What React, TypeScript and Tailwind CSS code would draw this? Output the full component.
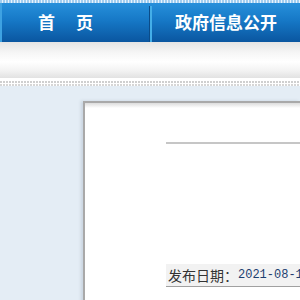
import React from 'react';

const App: React.FC = () => {
  return (
    <div className="w-[300px] h-[300px] overflow-hidden bg-[#e4edf5] font-['Noto_Sans_CJK_SC',sans-serif]">
      {/* dotted strip on top */}
      <div className="h-[3px] bg-[repeating-linear-gradient(90deg,#9fcdf0_0_2px,#e6f3fc_2px_3px)]" />

      {/* Nav bar */}
      <nav className="h-[39px] flex bg-[linear-gradient(180deg,#2690db_0%,#1678c6_45%,#0a56a0_100%)]">
        <div className="w-[2px] bg-[#3ea2e2]" />
        <div className="w-[147px] flex items-center justify-center gap-[21px] text-white font-bold text-[17px] leading-none pb-[3px] pr-[20px]">
          <span>首</span>
          <span>页</span>
        </div>
        <div className="flex flex-col pt-[3px]">
          <div className="flex flex-1">
            <div className="w-[1px] bg-[#0b4c88]" />
            <div className="w-[2px] bg-[#44aee8]" />
          </div>
        </div>
        <div className="flex-1 flex items-center justify-center text-white font-bold text-[17px] leading-none pb-[3px]">
          政府信息公开
        </div>
      </nav>

      {/* Gray band */}
      <div className="h-[36px] bg-[linear-gradient(180deg,#e4e4e4_0%,#f6f6f6_30%,#ffffff_55%,#f2f2f2_80%,#e2e2e2_100%)]" />
      <div className="h-[3px] bg-white" />
      <div className="h-[2px] bg-[repeating-linear-gradient(90deg,#cfcfcf_0_2px,#ffffff_2px_3px)]" />
      <div className="h-[1px] bg-white" />
      <div className="h-[2px] bg-[repeating-linear-gradient(90deg,#d6d6d6_0_2px,#ffffff_2px_3px)]" />

      {/* Main area */}
      <div className="pl-[83px] pt-[15px]">
        <div className="h-[260px] bg-white border-l-2 border-t-2 border-[#a9a9a9] shadow-[-2px_0_3px_rgba(120,140,160,0.25)]">
          <div className="h-[5px] bg-[linear-gradient(180deg,#dcdcdc,#ffffff)]" />
          <div className="pl-[81px] pt-[34px]">
            <div className="h-[2px] bg-[#c6c6c6]" />
            <div className="mt-[120px] h-[23px] bg-[#f2f2f2] border-b border-[#a0a0a0] flex items-center pl-[2px] whitespace-nowrap overflow-hidden">
              <span className="text-[14px] text-[#333333] leading-none">发布日期：</span>
              <span className="text-[12px] text-[#1d3f70] font-['Liberation_Mono',monospace] leading-none">2021-08-16</span>
            </div>
          </div>
        </div>
      </div>
    </div>
  );
};

export default App;
